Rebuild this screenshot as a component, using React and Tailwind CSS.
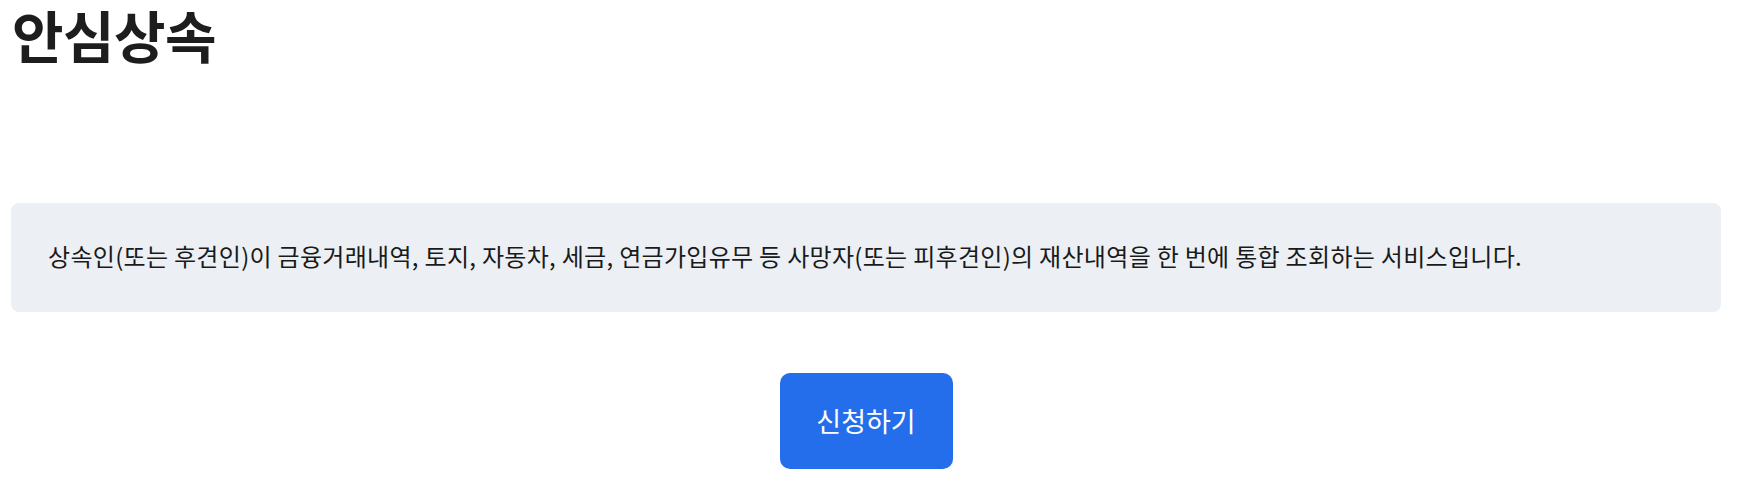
export default function App() {
  return (
    <div className="w-[1759px] h-[493px] bg-white px-[11px] text-[#1d1d1d]" style={{ fontFamily: '"Noto Sans CJK KR", "Noto Sans", sans-serif' }}>
      <h1 className="text-[56px] font-bold leading-[68px] tracking-[-0.5px] pl-[1px]">안심상속</h1>
      <div className="mt-[135px] w-[1710px] h-[109px] rounded-lg bg-[#ecf0f5] flex items-center pl-[37px] pb-[3px]">
        <p className="text-[24px] leading-[32px] tracking-[0.3px] text-[#1a1a1a]">
          상속인(또는 후견인)이 금융거래내역, 토지, 자동차, 세금, 연금가입유무 등 사망자(또는 피후견인)의 재산내역을 한 번에 통합 조회하는 서비스입니다.
        </p>
      </div>
      <div className="flex justify-center w-[1710px] mt-[61px]">
        <button className="w-[173px] h-[96px] rounded-[10px] bg-[#256eeb] text-white text-[27px]">신청하기</button>
      </div>
    </div>
  );
}
